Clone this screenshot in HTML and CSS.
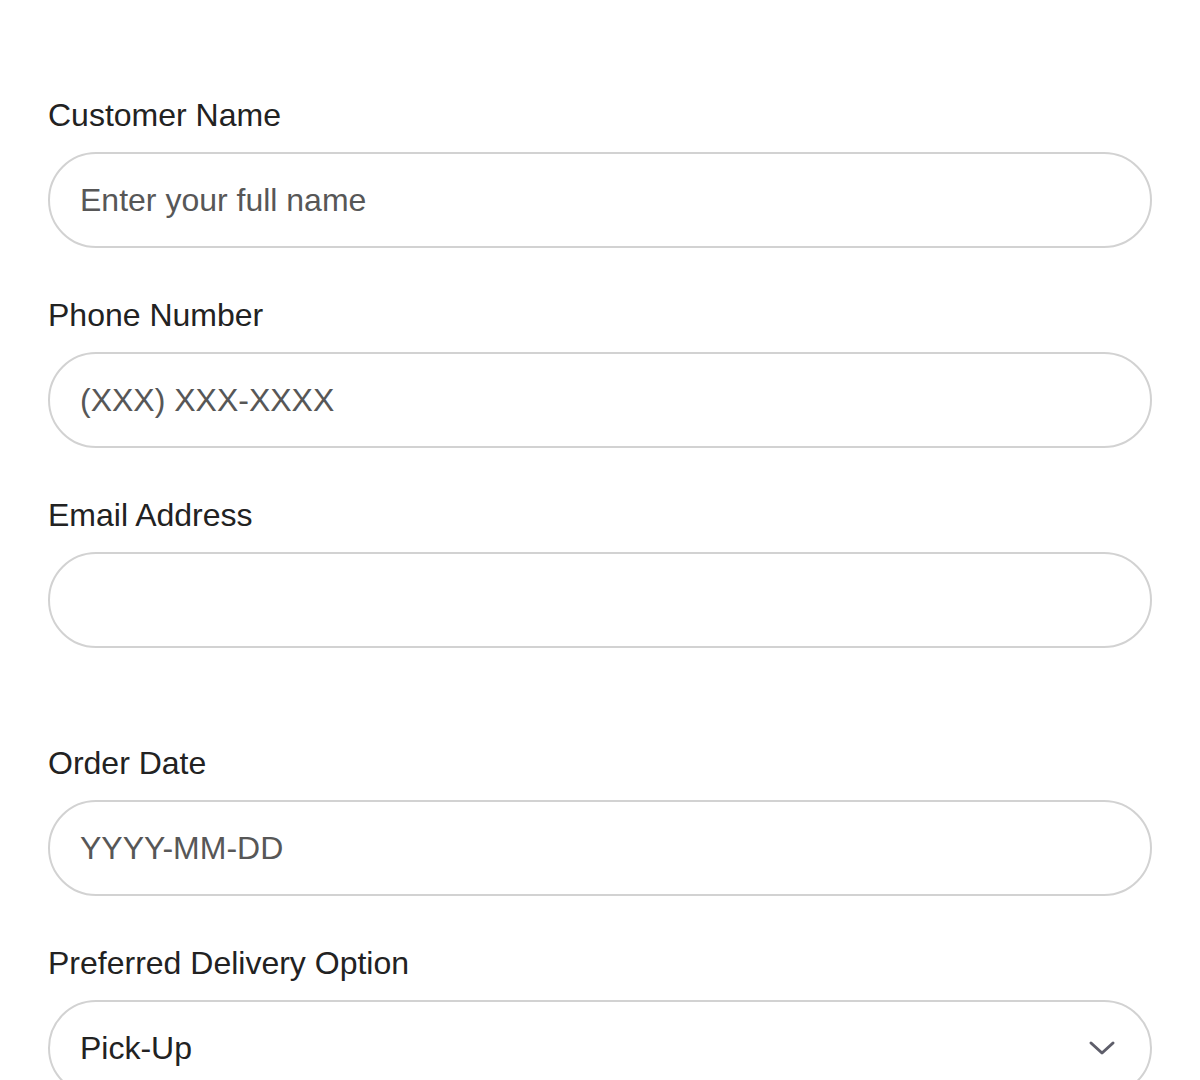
FILE: index.html
```html
<!DOCTYPE html>
<html lang="en">

<head>
    <meta charset="UTF-8">
    <meta name="viewport" content="width=device-width, initial-scale=1.0">
    <title>Order Form</title>
    <link rel="stylesheet" href="styles.css">
</head>

<body>
    <form class="order-form">
        <div class="field">
            <label>Customer Name</label>
            <input type="text" name="customer_name" placeholder="Enter your full name">
        </div>
        <div class="field">
            <label>Phone Number</label>
            <input type="tel" name="phone" placeholder="(XXX) XXX-XXXX">
        </div>
        <div class="field">
            <label>Email Address</label>
            <input type="email" name="email">
        </div>

        <div class="section-gap"></div>

        <div class="field">
            <label>Order Date</label>
            <input type="text" name="order_date" placeholder="YYYY-MM-DD">
        </div>
        <div class="field">
            <label>Preferred Delivery Option</label>
            <div class="select-wrap">
                <select name="delivery">
                    <option value="pickup">Pick-Up</option>
                    <option value="delivery">Delivery</option>
                </select>
                <svg class="chevron" width="28" height="16" viewBox="0 0 28 16">
                    <path d="M3 3 L14 13 L25 3" fill="none" stroke="#5e5e6a" stroke-width="3" stroke-linecap="round" stroke-linejoin="round"/>
                </svg>
            </div>
        </div>
    </form>
</body>

</html>
```

FILE: styles.css
```css
* {
    margin: 0;
    padding: 0;
    box-sizing: border-box;
}

body {
    background-color: #fff;
    font-family: 'Liberation Sans', Arial, sans-serif;
    color: #222;
}

.order-form {
    padding: 91px 48px 0;
}

.field {
    margin-bottom: 43px;
}

.field label {
    display: block;
    font-size: 32px;
    line-height: 48px;
    margin-bottom: 13px;
    color: #222;
}

.field input,
.field select {
    display: block;
    width: 100%;
    height: 96px;
    padding: 0 30px;
    border: 2px solid #d2d2d2;
    border-radius: 48px;
    background: #fff;
    font-family: inherit;
    font-size: 32px;
    color: #222;
    outline: none;
}

.field input::placeholder {
    color: #575757;
}

.field select {
    appearance: none;
    -webkit-appearance: none;
}

.section-gap {
    height: 48px;
}

.select-wrap {
    position: relative;
}

.chevron {
    position: absolute;
    right: 36px;
    top: 40px;
    pointer-events: none;
}
```
